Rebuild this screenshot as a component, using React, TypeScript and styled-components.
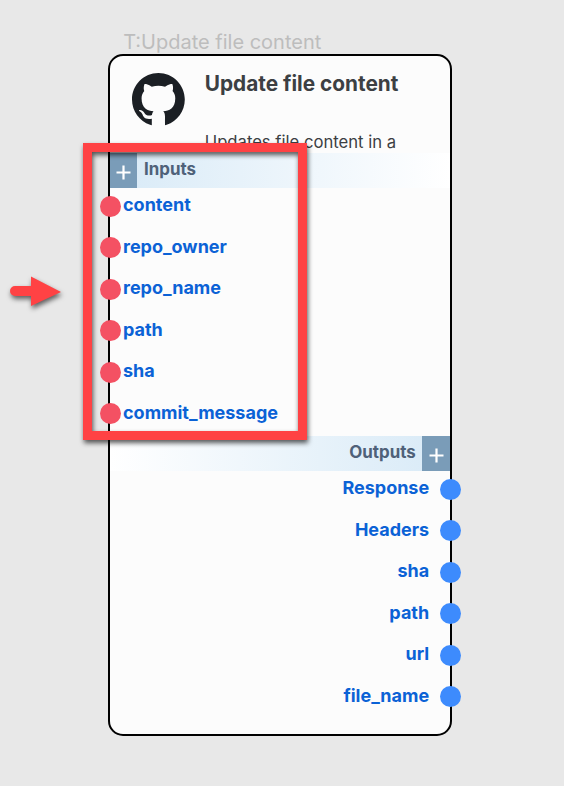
import React from "react";
import styled, { createGlobalStyle } from "styled-components";

const Global = createGlobalStyle`
  * { box-sizing: border-box; }
  html, body { margin: 0; background: #e8e8e8; }
  body { font-family: Inter, "Liberation Sans", sans-serif; }
`;

const Canvas = styled.main`
  position: relative;
  width: 564px;
  height: 786px;
  overflow: hidden;
  background: #e8e8e8;
  padding: 30px 0 0 107.5px;
`;

const NodeTag = styled.div`
  height: 24px;
  line-height: 24px;
  padding-left: 15.7px;
  font-size: 20px;
  color: #bdbdbd;
  white-space: nowrap;
`;

const Card = styled.section`
  width: 344.7px;
  height: 682px;
  border: 2px solid #000;
  border-radius: 15px;
  background: #fcfcfc;
  display: flex;
  flex-direction: column;
`;

const Header = styled.header`
  height: 97.4px;
  flex: none;
  display: flex;
  padding: 15.4px 0 0 22.7px;
  overflow: hidden;
`;

const Logo = styled.svg`
  width: 53px;
  height: 53px;
  flex: none;
  margin: 2px 19.6px 0 0;
`;

const Heading = styled.div`
  display: flex;
  flex-direction: column;
  gap: 34.5px;
  white-space: nowrap;
  color: #3c3f43;
`;

const Title = styled.h1`
  margin: 0;
  font-size: 20.8px;
  line-height: 25px;
  font-weight: 700;
`;

const Description = styled.p`
  margin: 0;
  font-size: 16.65px;
  line-height: 22px;
`;

const SectionBar = styled.div<{ $side: "left" | "right" }>`
  height: 34.5px;
  margin-bottom: -0.5px;
  flex: none;
  display: flex;
  flex-direction: ${(p) => (p.$side === "left" ? "row" : "row-reverse")};
  gap: 6.7px;
  background: linear-gradient(to ${(p) => (p.$side === "left" ? "right" : "left")}, #d8eaf7, #fff);
  color: #4f6179;
  font-size: 16.9px;
  font-weight: 700;
  line-height: 32px;
`;

const AddButton = styled.button`
  width: 27.8px;
  height: 100%;
  border: 0;
  padding: 3px 0 0;
  background: #7a9cb8;
  display: grid;
  place-items: center;
`;

const Port = styled.div<{ $side: "left" | "right" }>`
  height: 41.5px;
  flex: none;
  display: flex;
  align-items: flex-start;
  flex-direction: ${(p) => (p.$side === "left" ? "row" : "row-reverse")};
  gap: ${(p) => (p.$side === "left" ? "2.5px" : "11px")};
  margin: ${(p) => (p.$side === "left" ? "0 0 0 -10px" : "0 -11px 0 0")};
  color: #0b62d6;
  font-size: 18px;
  font-weight: 700;
  line-height: 36px;
`;

const Dot = styled.span<{ $color: string }>`
  width: 21px;
  height: 21px;
  margin-top: 8.4px;
  border-radius: 50%;
  background: ${(p) => p.$color};
`;

const Highlight = styled.div`
  position: absolute;
  left: 83px;
  top: 143px;
  width: 224px;
  height: 297px;
  border: 9px solid #ff4244;
  filter: drop-shadow(1px 3px 2.5px rgba(0, 0, 0, 0.65));
`;

const Arrow = styled.svg`
  position: absolute;
  left: 0;
  top: 266px;
  filter: drop-shadow(1px 3px 2.5px rgba(0, 0, 0, 0.6));
`;

const Plus = () => (
  <svg width="15" height="15" viewBox="0 0 15 15" stroke="#fff" strokeWidth="2.2">
    <path d="M.5 7.500h14M7.500 .5v14" />
  </svg>
);

const inputs = ["content", "repo_owner", "repo_name", "path", "sha", "commit_message"];
const outputs = ["Response", "Headers", "sha", "path", "url", "file_name"];

export default function App() {
  return (
    <Canvas>
      <Global />
      <NodeTag>T:Update file content</NodeTag>
      <Card>
        <Header>
          <Logo viewBox="0 0 98 98" fill="#1b1f24">
            <path d="M48.854 0C21.839 0 0 22 0 49.217c0 21.756 13.993 40.172 33.405 46.69q1.6.5 3.236.7V84.418c-13.59 2.934-16.42-5.867-16.42-5.867-2.184-5.704-5.42-7.17-5.42-7.17-4.448-3.015.324-3.015.324-3.015 4.934.326 7.523 5.052 7.523 5.052 4.367 7.496 11.404 5.378 14.235 4.074.404-3.178 1.699-5.378 3.074-6.6-10.839-1.141-22.243-5.378-22.243-24.283 0-5.378 1.94-9.778 5.014-13.2-.485-1.222-2.184-6.275.486-13.038 0 0 4.125-1.304 13.426 5.052a46.97 46.97 0 0 1 12.214-1.63c4.125 0 8.33.571 12.213 1.63 9.302-6.356 13.427-5.052 13.427-5.052 2.67 6.763.97 11.816.485 13.038 3.155 3.422 5.015 7.822 5.015 13.2 0 18.905-11.404 23.06-22.324 24.283 1.78 1.548 3.316 4.481 3.316 9.126V96.6q1.6-.2 3.236-.7c19.412-6.52 33.405-24.935 33.405-46.691C97.707 22 75.788 0 48.854 0z" />
          </Logo>
          <Heading>
            <Title>Update file content</Title>
            <Description>Updates file content in a</Description>
          </Heading>
        </Header>
        <SectionBar $side="left">
          <AddButton aria-label="Add input"><Plus /></AddButton>
          Inputs
        </SectionBar>
        {inputs.map((name) => (
          <Port key={name} $side="left"><Dot $color="#f45163" />{name}</Port>
        ))}
        <SectionBar $side="right">
          <AddButton aria-label="Add output"><Plus /></AddButton>
          Outputs
        </SectionBar>
        {outputs.map((name) => (
          <Port key={name} $side="right"><Dot $color="#3d8bfd" />{name}</Port>
        ))}
      </Card>
      <Highlight />
      <Arrow width="70" height="54" viewBox="0 0 70 54" fill="#ff4244">
        <path d="M15 20H31V10.500L61 26L31 40V30H15A5 5 0 0 1 15 20Z" />
      </Arrow>
    </Canvas>
  );
}
